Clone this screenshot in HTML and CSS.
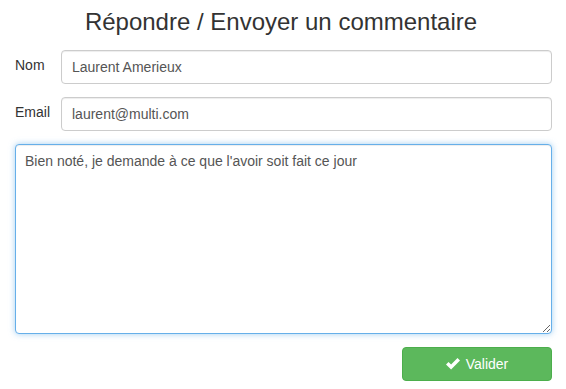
FILE: index.html
```html
<!DOCTYPE html>
<html lang="fr">
<head>
<meta charset="utf-8">
<title>Répondre / Envoyer un commentaire</title>
<link rel="stylesheet" href="styles.css">
</head>
<body>
<form class="reply-form">
  <h3 class="title">Répondre / Envoyer un commentaire</h3>
  <div class="form-row">
    <label class="form-label" for="nom">Nom</label>
    <input class="form-input" id="nom" type="text" value="Laurent Amerieux">
  </div>
  <div class="form-row">
    <label class="form-label" for="email">Email</label>
    <input class="form-input" id="email" type="text" value="laurent@multi.com">
  </div>
  <div class="form-row">
    <textarea class="form-textarea is-focused">Bien noté, je demande à ce que l'avoir soit fait ce jour</textarea>
  </div>
  <div class="form-actions">
    <button type="button" class="btn-success">
      <svg class="check" width="14" height="12" viewBox="0 0 14 12" aria-hidden="true"><path d="M0 6.4 L2.5 3.9 L5.1 6.5 L11.5 0.1 L14 2.6 L5.1 11.5 Z" fill="#fff"/></svg>
      <span>Valider</span>
    </button>
  </div>
</form>
</body>
</html>
```
FILE: styles.css
```css
* { box-sizing: border-box; }
html, body {
  margin: 0;
  padding: 0;
  background: #fff;
}
body {
  font-family: "Liberation Sans", Arial, sans-serif;
  font-size: 14px;
  line-height: 20px;
  color: #333;
}
.reply-form {
  padding: 9px 14px 0 15px;
}
.title {
  margin: 0 0 15px 0;
  padding-right: 5px;
  font-size: 24px;
  font-weight: normal;
  line-height: 26px;
  text-align: center;
  color: #333;
}
.form-row {
  display: flex;
  align-items: flex-start;
  margin-bottom: 13px;
}
.form-label {
  width: 46px;
  flex: none;
  padding-top: 5px;
  font-size: 14px;
  color: #333;
}
.form-input,
.form-textarea {
  display: block;
  flex: 1;
  min-width: 0;
  height: 34px;
  padding: 6px 10px;
  font-family: "Liberation Sans", Arial, sans-serif;
  font-size: 14px;
  line-height: 20px;
  color: #555;
  background: #fff;
  border: 1px solid #ccc;
  border-radius: 4px;
  box-shadow: inset 0 1px 1px rgba(0,0,0,0.075);
  outline: none;
}
.form-textarea {
  height: 190px;
  resize: vertical;
  padding: 6px 9px;
}
.is-focused {
  border-color: #66afe9;
  box-shadow: inset 0 1px 1px rgba(0,0,0,0.075), 0 0 6px rgba(102,175,233,0.6);
}
.form-actions {
  display: flex;
  justify-content: flex-end;
}
.btn-success {
  display: flex;
  align-items: center;
  justify-content: center;
  gap: 6px;
  width: 150px;
  height: 34px;
  padding: 6px 12px;
  font-family: "Liberation Sans", Arial, sans-serif;
  font-size: 14px;
  line-height: 20px;
  color: #fff;
  background: #5cb85c;
  border: 1px solid #4cae4c;
  border-radius: 4px;
  cursor: pointer;
}
.check { display: block; margin-top: -1px; }
```
